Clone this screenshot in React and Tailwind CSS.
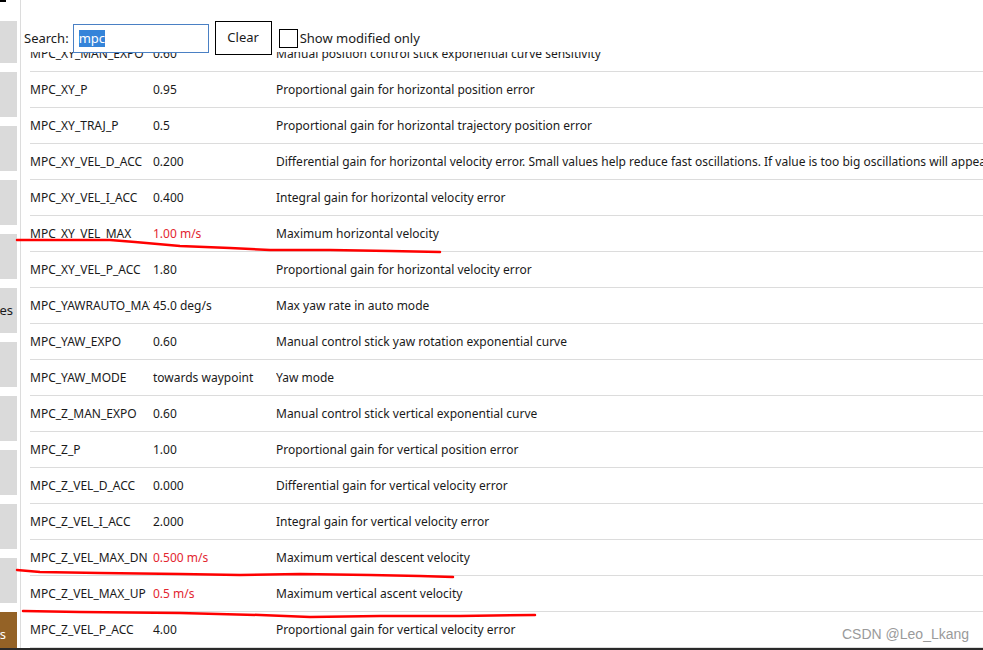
const rows = [
  { name: 'MPC_XY_MAN_EXPO', value: '0.60', desc: 'Manual position control stick exponential curve sensitivity' },
  { name: 'MPC_XY_P', value: '0.95', desc: 'Proportional gain for horizontal position error' },
  { name: 'MPC_XY_TRAJ_P', value: '0.5', desc: 'Proportional gain for horizontal trajectory position error' },
  { name: 'MPC_XY_VEL_D_ACC', value: '0.200', desc: 'Differential gain for horizontal velocity error. Small values help reduce fast oscillations. If value is too big oscillations will appear again.' },
  { name: 'MPC_XY_VEL_I_ACC', value: '0.400', desc: 'Integral gain for horizontal velocity error' },
  { name: 'MPC_XY_VEL_MAX', value: '1.00 m/s', desc: 'Maximum horizontal velocity', modified: true },
  { name: 'MPC_XY_VEL_P_ACC', value: '1.80', desc: 'Proportional gain for horizontal velocity error' },
  { name: 'MPC_YAWRAUTO_MAX', value: '45.0 deg/s', desc: 'Max yaw rate in auto mode' },
  { name: 'MPC_YAW_EXPO', value: '0.60', desc: 'Manual control stick yaw rotation exponential curve' },
  { name: 'MPC_YAW_MODE', value: 'towards waypoint', desc: 'Yaw mode' },
  { name: 'MPC_Z_MAN_EXPO', value: '0.60', desc: 'Manual control stick vertical exponential curve' },
  { name: 'MPC_Z_P', value: '1.00', desc: 'Proportional gain for vertical position error' },
  { name: 'MPC_Z_VEL_D_ACC', value: '0.000', desc: 'Differential gain for vertical velocity error' },
  { name: 'MPC_Z_VEL_I_ACC', value: '2.000', desc: 'Integral gain for vertical velocity error' },
  { name: 'MPC_Z_VEL_MAX_DN', value: '0.500 m/s', desc: 'Maximum vertical descent velocity', modified: true },
  { name: 'MPC_Z_VEL_MAX_UP', value: '0.5 m/s', desc: 'Maximum vertical ascent velocity', modified: true },
  { name: 'MPC_Z_VEL_P_ACC', value: '4.00', desc: 'Proportional gain for vertical velocity error' },
]

const sideButtons = ['Summary', 'Firmware', 'Airframe', 'Sensors', 'Radio', 'Flight Modes', 'Power', 'Safety', 'Tuning', 'Camera', 'Tools']

const App = () => {
  return (
    <div
      className="relative flex h-[650px] w-[983px] overflow-hidden bg-white text-[12px] text-[#1a1a1a]"
      style={{ fontFamily: '"Noto Sans", "Open Sans", sans-serif' }}
    >
      {/* left toolbar, scrolled so only its right edge shows */}
      <aside className="flex w-[17px] shrink-0 flex-col gap-[9px] pt-[21px] text-[13px]">
        {sideButtons.map((label, i) => (
          <div
            key={label}
            className={`flex shrink-0 items-center justify-end overflow-hidden whitespace-nowrap bg-[#dadada] ${i === 0 ? 'h-[42px]' : 'h-[45px]'}`}
          >
            <span className={`pr-[4px] ${i === 5 ? '' : 'invisible'}`}>{label}</span>
          </div>
        ))}
        <div className="flex h-[45px] shrink-0 items-center justify-end overflow-hidden whitespace-nowrap bg-[#946226] text-white">
          <span className="pr-[11px]">Parameters</span>
        </div>
      </aside>
      <div className="w-[3px] shrink-0" />

      <main className="flex-1 overflow-hidden border-l border-[#dcdcdc]">
        <div className="relative z-10 flex h-[52px] items-start bg-white pl-[3px] pt-[21px] text-[13px]">
          <span className="mt-[8px]">Search:</span>
          <div className="ml-[4px] mt-[3px] flex h-[29px] w-[136px] items-center border border-[#4a80c4] px-[5px]">
            <span className="bg-[#3584d9] leading-[17px] text-white">mpc</span>
          </div>
          <button className="ml-[6px] h-[34px] w-[57px] border border-black bg-white">Clear</button>
          <div className="ml-[7px] mt-[8px] h-[19px] w-[19px] border border-black bg-white" />
          <span className="ml-[2px] mt-[8px]">Show modified only</span>
        </div>

        <div className="-mt-[16px] ml-[9px]">
          {rows.map(row => (
            <div
              key={row.name}
              className="grid h-[36px] grid-cols-[123px_123px_1fr] items-center whitespace-nowrap border-b border-[#dcdcdc]"
            >
              <span className="max-w-[120px] overflow-hidden">{row.name}</span>
              <span className={row.modified ? 'text-[#e3262f]' : ''}>{row.value}</span>
              <span className="overflow-hidden">{row.desc}</span>
            </div>
          ))}
        </div>
      </main>

      {/* hand drawn annotations */}
      <svg className="pointer-events-none absolute inset-0" width="983" height="650" fill="none">
        <path d="M17 240 L60 240 L110 240 L135 242 L180 246 L230 248 L270 250 L330 250 L390 251 L440 252" stroke="#ff0000" strokeWidth="2.5" strokeLinecap="round" />
        <path d="M17 570 L40 572 L100 573 L180 574 L240 575 L300 574 L370 575 L420 576 L453 577" stroke="#ff0000" strokeWidth="2.5" strokeLinecap="round" />
        <path d="M23 611 L80 612 L180 613 L260 615 L310 617 L380 616 L460 616 L535 615" stroke="#ff0000" strokeWidth="2.5" strokeLinecap="round" />
      </svg>

      <div className="pointer-events-none absolute left-0 top-0 h-[2px] w-[6px] bg-black" />
      <div
        className="pointer-events-none absolute left-[842px] top-[624px] text-[14px] text-[#9a9a9a]"
        style={{ fontFamily: '"Liberation Sans", Arial, sans-serif' }}
      >
        CSDN @Leo_Lkang
      </div>
      <div className="pointer-events-none absolute inset-x-0 bottom-0 h-[2px] bg-[#2a2a2a]" />
    </div>
  )
}

export default App
